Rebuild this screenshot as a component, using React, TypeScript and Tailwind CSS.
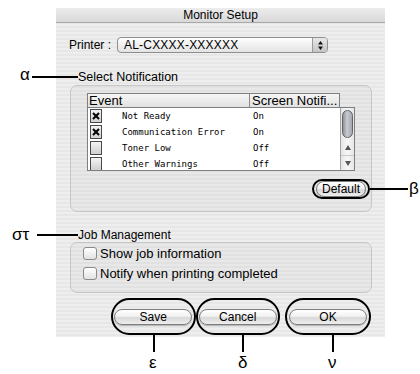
import React from 'react';

const stripes =
  'bg-[image:repeating-linear-gradient(180deg,#eeeeee_0px,#eeeeee_2px,#e7e7e7_2px,#e7e7e7_4px)]';

const rows = [
  { label: 'Not Ready', value: 'On', checked: true },
  { label: 'Communication Error', value: 'On', checked: true },
  { label: 'Toner Low', value: 'Off', checked: false },
  { label: 'Other Warnings', value: 'Off', checked: false },
];

const AquaButton: React.FC<{ label: string; width: string }> = ({ label, width }) => (
  <div
    className={`${width} h-[16px] flex items-center justify-center rounded-full border border-[#7d7d7d] bg-[linear-gradient(180deg,#ffffff_0%,#f1f1f1_45%,#d9d9d9_55%,#eeeeee_100%)] shadow-[0_1px_1px_rgba(0,0,0,0.25)] text-[12px] leading-none text-black`}
  >
    {label}
  </div>
);

const Callout: React.FC<{ label: string; width: string; btn: string }> = ({ label, width, btn }) => (
  <div className={`${width} h-[37px] flex items-center justify-center rounded-full border-2 border-black`}>
    <AquaButton label={label} width={btn} />
  </div>
);

const ListCheck: React.FC<{ checked: boolean }> = ({ checked }) => (
  <div className="w-[12px] h-[14px] flex items-center justify-center border border-[#4a4a4a] bg-[linear-gradient(180deg,#f4f4f4_0%,#cfcfcf_100%)]">
    {checked && (
      <svg width="8" height="8" viewBox="0 0 8 8">
        <path d="M1 1L7 7M7 1L1 7" stroke="#000" strokeWidth="2" />
      </svg>
    )}
  </div>
);

const JobCheck: React.FC<{ label: string }> = ({ label }) => (
  <div className="h-[20px] flex items-center gap-[3px] pl-[12px]">
    <div className="w-[14px] h-[13px] rounded-[3px] border border-[#8a8a8a] bg-[linear-gradient(180deg,#ffffff_0%,#e2e2e2_100%)]" />
    <span className="text-[13px] leading-none">{label}</span>
  </div>
);

export default function App() {
  return (
    <div className="relative w-[420px] h-[374px] bg-white overflow-hidden pl-[56px] pt-[8px] font-['Liberation_Sans',Arial,sans-serif] text-black">
      {/* dialog window */}
      <div className={`w-[329px] h-[329px] flex flex-col ${stripes}`}>
        <div className="h-[15px] flex items-center justify-center border-b border-[#a8a8a8] bg-[linear-gradient(180deg,#ececec_0%,#d9d9d9_100%)] text-[12px] leading-none">
          Monitor Setup
        </div>

        <div className="flex flex-col px-[14px]">
          {/* printer popup */}
          <div className="mt-[14px] h-[16px] flex items-center">
            <span className="ml-[-1px] text-[12px] leading-none w-[48px]">Printer :</span>
            <div className="w-[211px] h-[16px] flex items-center rounded-[4px] border border-[#8e8e8e] bg-[linear-gradient(180deg,#ffffff_0%,#f0f0f0_50%,#e3e3e3_100%)] overflow-hidden">
              <span className="flex-1 pl-[6px] text-[12px] leading-none tracking-[0.2px]">AL-CXXXX-XXXXXX</span>
              <div className="w-[15px] h-full flex items-center justify-center border-l border-[#9a9a9a] bg-[linear-gradient(180deg,#e8e8e8_0%,#c4c4c4_100%)]">
                <svg width="5" height="9" viewBox="0 0 5 9">
                  <path d="M2.5 0L5 3.5H0Z M2.5 9L0 5.5H5Z" fill="#111" />
                </svg>
              </div>
            </div>
          </div>

          {/* Select Notification */}
          <div className="mt-[17px] h-[15px] pl-[8px] flex items-center text-[12.5px] leading-none">Select Notification</div>
          <div className="w-[302px] h-[127px] flex flex-col rounded-[7px] border border-[#c6c6c6] bg-[rgba(0,0,0,0.025)] pl-[16px] pt-[7px]">
            <div className="w-[268px] h-[78px] flex flex-col">
              <div className="w-[253px] h-[14px] flex border border-b-0 border-[#7f7f7f] bg-[linear-gradient(180deg,#f6f6f6_0%,#e1e1e1_100%)] text-[13px] leading-none">
                <div className="w-[162px] h-full flex items-center pl-[1px] border-r border-[#8a8a8a]">Event</div>
                <div className="flex-1 h-full flex items-center pl-[2px] whitespace-nowrap overflow-hidden">Screen Notifi...</div>
              </div>
              <div className="flex h-[64px] border border-[#7f7f7f] bg-white">
                <div className="w-[252px] h-full overflow-hidden font-['DejaVu_Sans_Mono',monospace] text-[9px] leading-none">
                  {rows.map((r) => (
                    <div key={r.label} className="h-[16px] flex items-center">
                      <div className="w-[34px] pl-[2px]">
                        <ListCheck checked={r.checked} />
                      </div>
                      <div className="w-[129px]">{r.label}</div>
                      <div className="pl-[2px]">{r.value}</div>
                    </div>
                  ))}
                </div>
                {/* scrollbar */}
                <div className="flex-1 h-full flex flex-col items-center border-l border-[#a4a4a4] bg-[linear-gradient(90deg,#e6e6e6_0%,#f7f7f7_50%,#e6e6e6_100%)]">
                  <div className="mt-[2px] w-[11px] h-[28px] rounded-full border border-[#5f636a] bg-[linear-gradient(90deg,#8d9198_0%,#c9ccd1_45%,#a3a7ae_100%)]" />
                  <div className="flex-1" />
                  <div className="w-full h-[16px] flex items-center justify-center border-b border-[#c8c8c8]">
                    <svg width="6" height="5" viewBox="0 0 6 5">
                      <path d="M3 0L6 5H0Z" fill="#555" />
                    </svg>
                  </div>
                  <div className="w-full h-[14px] flex items-center justify-center">
                    <svg width="6" height="5" viewBox="0 0 6 5">
                      <path d="M3 5L0 0H6Z" fill="#555" />
                    </svg>
                  </div>
                </div>
              </div>
            </div>
            <div className="mt-[8px] flex justify-end pr-[1px]">
              <div className="w-[58px] h-[20px] flex items-center justify-center rounded-full border-2 border-black">
                <AquaButton label="Default" width="w-[50px]" />
              </div>
            </div>
          </div>

          {/* Job Management */}
          <div className="mt-[15px] h-[15px] pl-[8px] flex items-center text-[12px] leading-none">Job Management</div>
          <div className="w-[302px] h-[51px] flex flex-col rounded-[7px] border border-[#c6c6c6] bg-[rgba(0,0,0,0.025)]">
            <JobCheck label="Show job information" />
            <JobCheck label="Notify when printing completed" />
          </div>

          {/* buttons */}
          <div className="mt-[5px] pl-[41px] flex">
            <Callout label="Save" width="w-[88px]" btn="w-[78px]" />
            <Callout label="Cancel" width="w-[88px]" btn="w-[78px]" />
            <div className="ml-[5px]">
              <Callout label="OK" width="w-[86px]" btn="w-[78px]" />
            </div>
          </div>
        </div>
      </div>

      {/* annotation callouts */}
      <span className="absolute left-[20px] top-[66px] text-[17px] leading-none font-['Liberation_Sans',sans-serif]">α</span>
      <div className="absolute left-[32px] top-[76px] w-[46px] h-[2px] bg-black" />
      <div className="absolute left-[370px] top-[188px] w-[38px] h-[2px] bg-black" />
      <span className="absolute left-[409px] top-[180px] text-[17px] leading-none">β</span>
      <span className="absolute left-[12px] top-[226px] text-[17px] leading-none">στ</span>
      <div className="absolute left-[37px] top-[234px] w-[41px] h-[2px] bg-black" />
      <div className="absolute left-[153px] top-[335px] w-[2px] h-[17px] bg-black" />
      <div className="absolute left-[242px] top-[335px] w-[2px] h-[17px] bg-black" />
      <div className="absolute left-[332px] top-[335px] w-[2px] h-[17px] bg-black" />
      <span className="absolute left-[149px] top-[354px] text-[17px] leading-none">ε</span>
      <span className="absolute left-[238px] top-[354px] text-[17px] leading-none">δ</span>
      <span className="absolute left-[328px] top-[354px] text-[17px] leading-none">ν</span>
    </div>
  );
}
